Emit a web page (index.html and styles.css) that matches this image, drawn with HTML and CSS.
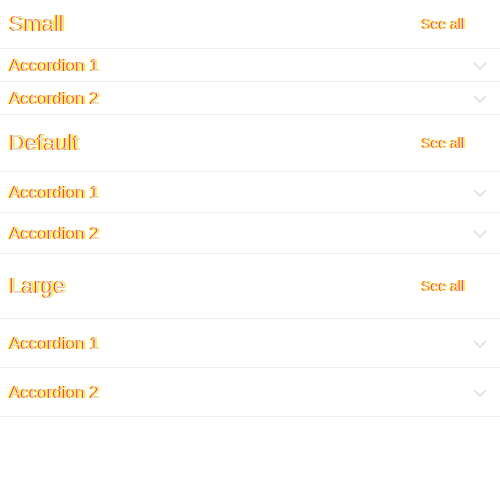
FILE: index.html
```html
<!DOCTYPE html>
<html>
<head>
<meta charset="utf-8">
<link rel="stylesheet" href="styles.css">
</head>
<body>
<section class="group small">
  <div class="head"><h2 class="title">Small</h2><a class="see">See all</a></div>
  <div class="row"><span class="label">Accordion 1</span><svg class="chev" viewBox="0 0 14 8"><path d="M1 1l6 6 6-6"/></svg></div>
  <div class="row"><span class="label">Accordion 2</span><svg class="chev" viewBox="0 0 14 8"><path d="M1 1l6 6 6-6"/></svg></div>
</section>
<section class="group default">
  <div class="head"><h2 class="title">Default</h2><a class="see">See all</a></div>
  <div class="row"><span class="label">Accordion 1</span><svg class="chev" viewBox="0 0 14 8"><path d="M1 1l6 6 6-6"/></svg></div>
  <div class="row"><span class="label">Accordion 2</span><svg class="chev" viewBox="0 0 14 8"><path d="M1 1l6 6 6-6"/></svg></div>
</section>
<section class="group large">
  <div class="head"><h2 class="title">Large</h2><a class="see">See all</a></div>
  <div class="row"><span class="label">Accordion 1</span><svg class="chev" viewBox="0 0 14 8"><path d="M1 1l6 6 6-6"/></svg></div>
  <div class="row"><span class="label">Accordion 2</span><svg class="chev" viewBox="0 0 14 8"><path d="M1 1l6 6 6-6"/></svg></div>
</section>
</body>
</html>
```
FILE: styles.css
```css
html, body { margin: 0; padding: 0; background: #fff; }
body { font-family: "Liberation Sans", Arial, sans-serif; }
.head, .row {
  display: flex;
  align-items: center;
  border-bottom: 1px solid #eeeeee;
  padding-left: 10px;
}
.title {
  margin: 0;
  flex: 1;
  font-size: 22px;
  line-height: 28px;
  font-weight: normal;
}
.title, .label, .see {
  color: #e6e6e6;
  text-shadow: -1px 0 #f00, -2px 0 #ff0, 1px 0 #ff0;
}
.see {
  font-size: 14px;
  line-height: 18px;
  margin-right: 35px;
}
.label {
  flex: 1;
  font-size: 17px;
  line-height: 20px;
}
.chev {
  width: 14px;
  height: 8px;
  margin-right: 13px;
  fill: none;
  stroke: #dddddd;
  stroke-width: 1.6;
}
.small .head { padding-top: 10px; padding-bottom: 10px; }
.small .row { padding-top: 7px; padding-bottom: 5px; }
.default .head { padding-top: 14px; padding-bottom: 14px; }
.default .row { padding-top: 11px; padding-bottom: 9px; }
.large .head { padding-top: 18px; padding-bottom: 18px; }
.large .row { padding-top: 15px; padding-bottom: 13px; }
```
